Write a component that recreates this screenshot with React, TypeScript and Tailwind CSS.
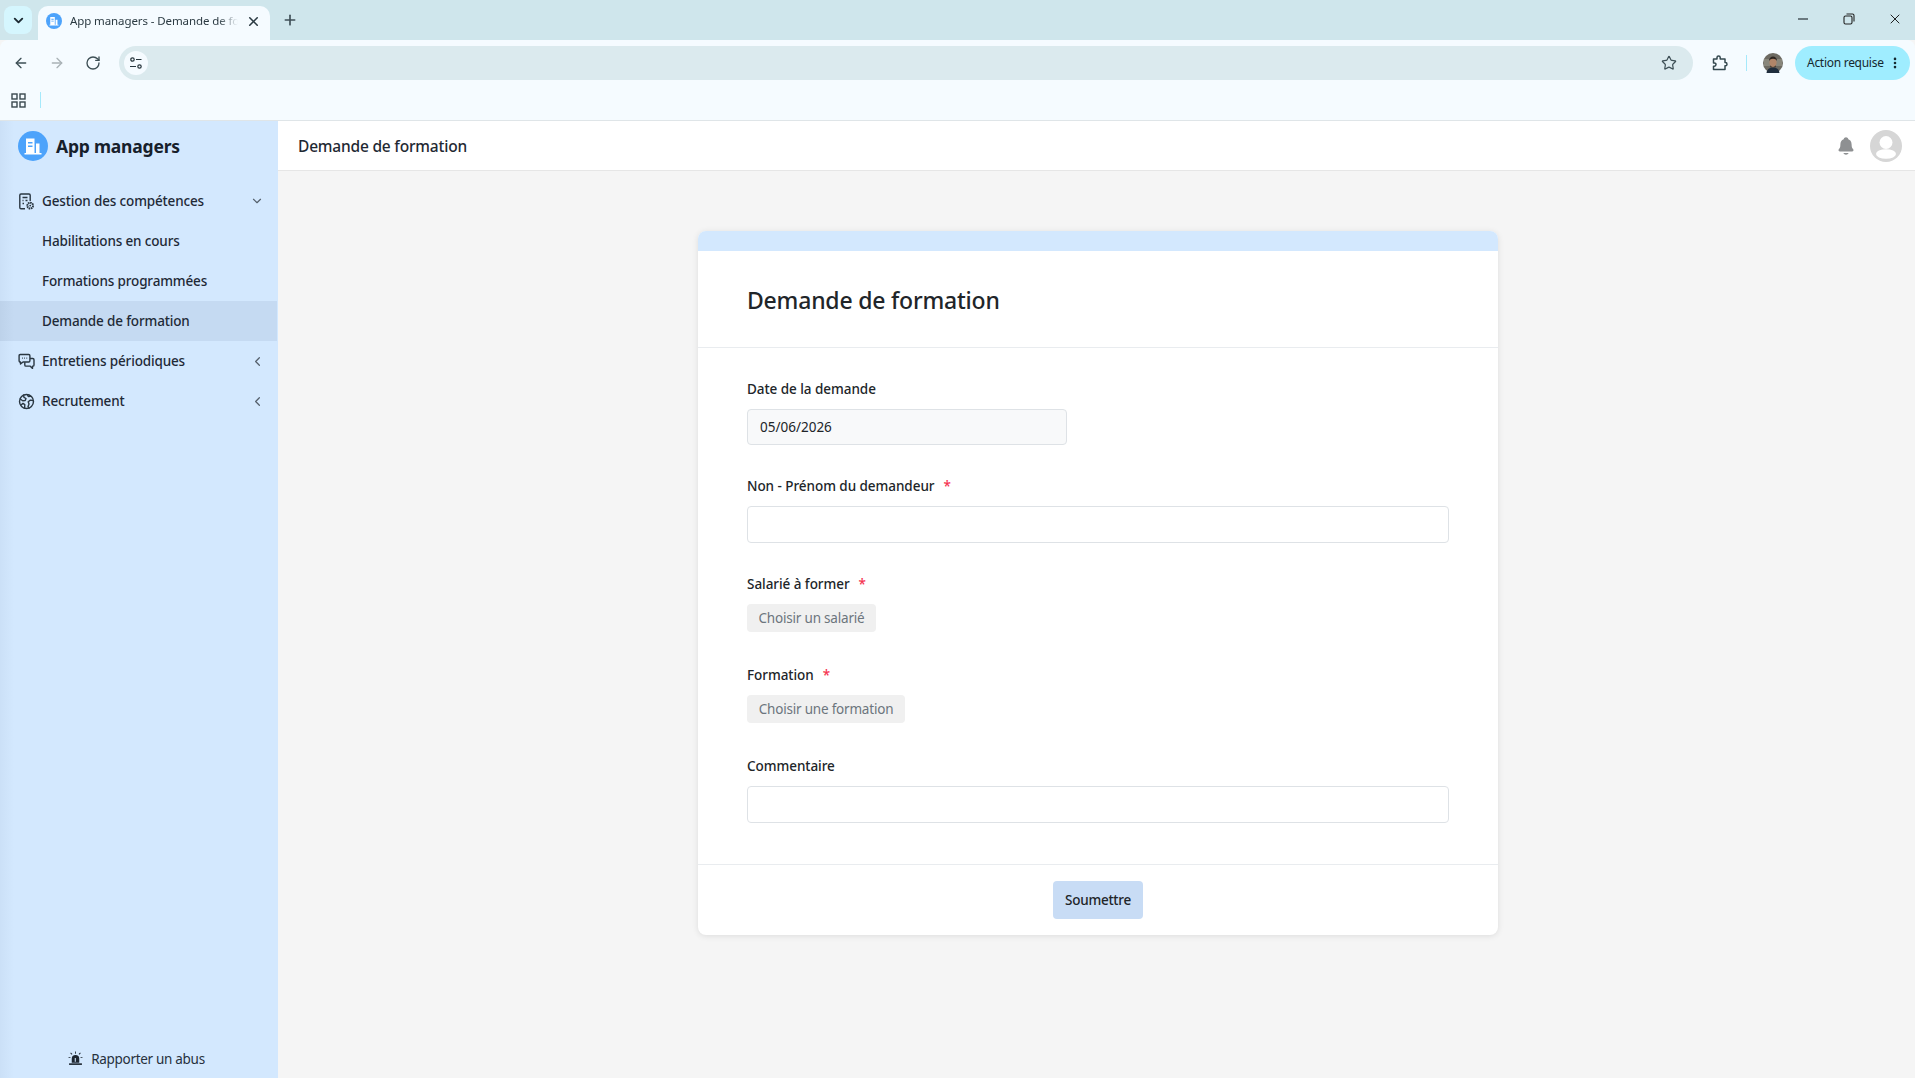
import { ArrowLeft, ArrowRight, ChevronDown, ChevronLeft, EllipsisVertical, Plus, RotateCw, Star, X } from "lucide-react";
import { IoNotifications } from "react-icons/io5";

const font = "font-['Noto_Sans','Liberation_Sans',sans-serif]";

function Logo({ size }: { size: number }) {
  return (
    <svg width={size} height={size} viewBox="0 0 30 30">
      <circle cx="15" cy="15" r="15" fill="#4da3fb" />
      <path d="M8 7.500h8.500v15H8z M18 12.500h3.500v10H18z M6.500 22h17v1.500h-17z" fill="#fff" />
      <path d="M10 11h4.500v1.500H10z M10 14.500h4.500V16H10z" fill="#4da3fb" />
    </svg>
  );
}

function FileGear() {
  return (
    <svg width="17" height="17" viewBox="0 0 17 17" fill="none" stroke="#2a3742" strokeWidth="1.4">
      <path d="M7 15.700H3a1.200 1.200 0 0 1-1.200-1.200V2.200A1.200 1.200 0 0 1 3 1h8a1.200 1.200 0 0 1 1.200 1.200V8" />
      <path d="M4.500 4.500h5M4.500 7.500h1M7.500 7.500h2M4.500 10.500h1.500" />
      <circle cx="12.200" cy="12.600" r="2.900" strokeWidth="1.900" strokeDasharray="1.600 0.600" />
      <circle cx="12.200" cy="12.600" r="0.900" fill="#2a3742" stroke="none" />
    </svg>
  );
}

function Chats() {
  return (
    <svg width="17" height="17" viewBox="0 0 17 17" fill="none" stroke="#2a3742" strokeWidth="1.4" strokeLinejoin="round">
      <path d="M2.300 1.500h8.400c.7 0 1.200.5 1.200 1.200v5.100c0 .7-.5 1.200-1.200 1.200H5L2.500 11V9H2.300c-.7 0-1.200-.5-1.200-1.200V2.700c0-.7.5-1.200 1.200-1.200z" />
      <path d="M12 5.500h2.800c.7 0 1.200.5 1.200 1.200v5.200c0 .7-.5 1.200-1.200 1.200h-.3v2.300L12 13.100H8c-.7 0-1.200-.5-1.200-1.200V9.300" />
      <path d="M4 5.200h.8M6.200 5.200H7M8.400 5.200h.8" strokeWidth="1.200" />
    </svg>
  );
}

function Globe() {
  return (
    <svg width="17" height="17" viewBox="0 0 17 17" fill="none" stroke="#2a3742" strokeWidth="1.4" strokeLinejoin="round" strokeLinecap="round">
      <circle cx="8.500" cy="8.500" r="7" />
      <path d="M5.500 2.200 6 4.400 8 5.500 7.200 7.500 4.700 7.800 2.200 6" />
      <path d="M9.500 1.700 10.300 3.600 12.700 3.400" />
      <path d="M15 7.500 12.400 7.100 10.200 8.800 11 11 10 13.800 11 14.900" />
      <path d="M3 12 5 10.400 6.800 11.600 6.600 15" />
    </svg>
  );
}

function Alarm() {
  return (
    <svg width="15" height="15" viewBox="0 0 14 14" fill="#1d2630">
      <path d="M3.500 11V7.300a3.500 3.500 0 0 1 7 0V11z" />
      <path d="M1 11.500h12V13H1z" />
      <path d="M6.600.5h.8v2h-.8zM2.100 2l.6-.6 1.400 1.500-.6.5zM11.900 2l-.6-.6-1.400 1.500.6.5zM.5 5.600h1.800v.8H.5zM11.700 5.600h1.800v.8h-1.800z" />
      <path d="M6.300 6.500h1V10h-1z" fill="#d3e8fe" />
    </svg>
  );
}

function NavRow({ icon, label, chevron, active }: { icon?: React.ReactNode; label: string; chevron?: "down" | "left"; active?: boolean }) {
  return (
    <div className={`mr-px flex h-10 items-center pl-[18px] pr-[12px] ${active ? "bg-[linear-gradient(90deg,#bdd2ea,#c5daf2_14px)]" : ""}`}>
      <div className="w-[24px] shrink-0">{icon}</div>
      <span className="flex-1 text-[13.5px] font-medium tracking-[-0.15px] text-[#1f2a37]">{label}</span>
      {chevron === "down" && <ChevronDown size={14} color="#55606c" className="mr-[1px]" />}
      {chevron === "left" && <ChevronLeft size={15} color="#55606c" />}
    </div>
  );
}

function Label({ text, required }: { text: string; required?: boolean }) {
  return (
    <div className="flex h-5 items-center text-[13.5px] font-medium tracking-[-0.05px] text-[#212529]">
      {text}
      {required && <span className="ml-[9px] text-[#f5334f]">*</span>}
    </div>
  );
}

export default function App() {
  return (
    <div className={`flex h-[1078px] w-[1915px] flex-col overflow-hidden bg-[#f5f5f5] ${font}`}>
      {/* browser tabs */}
      <div className="flex h-10 items-end bg-[#cfe6ec]">
        <div className="mb-[6px] ml-1 flex h-[28px] w-[28px] items-center justify-center rounded-lg bg-[#d5f6fe]">
          <ChevronDown size={15} strokeWidth={3} color="#1d2b33" />
        </div>
        <div className="ml-[6px] flex h-[34px] w-[232px] items-center rounded-t-[10px] bg-[#f5fbff] pb-1 pl-2 pr-[9px]">
          <Logo size={16} />
          <span className="ml-2 w-[168px] overflow-hidden text-[11.5px] tracking-[-0.1px] whitespace-nowrap text-[#2b3a42] [mask-image:linear-gradient(90deg,#000_88%,transparent)]">App managers - Demande de formation</span>
          <X size={15} strokeWidth={2.5} color="#2b3a42" className="ml-auto" />
        </div>
        <Plus size={16} strokeWidth={2.5} color="#3f4f57" className="mb-[12px] ml-[12px]" />
        <div className="mb-[13px] ml-auto flex items-center pr-[12px]">
          <div className="h-[2px] w-[10px] bg-[#6b7a80]" />
          <svg width="12" height="12" viewBox="0 0 12 12" fill="none" stroke="#222" strokeWidth="1.100" className="ml-[35px]">
            <rect x="1" y="3" width="8" height="8" rx="1.500" />
            <path d="M3.500 1h6a1.500 1.500 0 0 1 1.500 1.500v6" />
          </svg>
          <X size={16} strokeWidth={1.400} color="#111" className="ml-[32px]" />
        </div>
      </div>
      {/* browser toolbar */}
      <div className="flex h-[46px] items-center rounded-t-lg bg-[#f5fbff] pl-[13px]">
        <ArrowLeft size={16} strokeWidth={2} color="#3d4f55" />
        <ArrowRight size={16} strokeWidth={2} color="#a9b2b6" className="ml-[20px]" />
        <RotateCw size={16} strokeWidth={2} color="#3d4f55" className="ml-[20px]" />
        <div className="ml-[18px] flex h-[34px] w-[1574px] items-center rounded-full bg-[#dbeaee] pl-[5px] pr-[16px]">
          <div className="flex h-6 w-6 items-center justify-center rounded-full bg-[#f5fbff]">
            <svg width="14" height="14" viewBox="0 0 14 14" fill="none" stroke="#26353c" strokeWidth="1.200">
              <circle cx="3.500" cy="3.500" r="1.700" />
              <path d="M7 3.500h5.500M1 10.500h6" />
              <circle cx="10.500" cy="10.500" r="1.700" />
            </svg>
          </div>
          <Star size={16} strokeWidth={1.800} color="#3d4f55" className="ml-auto" />
        </div>
        <svg width="16" height="16" viewBox="0 0 16 16" fill="none" stroke="#34484f" strokeWidth="1.500" strokeLinejoin="round" className="ml-[19px]">
          <path d="M1.500 4H5V2.600a1.600 1.600 0 0 1 3.200 0V4H13v3.600h.4a1.600 1.600 0 0 1 0 3.200H13V14.500H1.500v-3.200h.8a1.600 1.600 0 0 0 0-3.400h-.8z" />
        </svg>
        <div className="ml-[18px] h-4 w-px bg-[#a5e9fb]" />
        <svg width="20" height="20" viewBox="0 0 20 20" className="ml-[16px]">
          <circle cx="10" cy="10" r="10" fill="#6d6a62" />
          <path d="M1 6h18v7H1z" fill="#9b9a8c" opacity="0.6" />
          <path d="M3.500 20c.5-4 3-5.500 6.500-5.500s6 1.500 6.500 5.500z" fill="#1f2d3d" />
          <ellipse cx="10" cy="9.500" rx="3.600" ry="4.700" fill="#b08569" />
          <path d="M6 8c0-3 2-4.500 4-4.500S14 5 14 8c-1-1.500-2-2.200-4-2.200S7 6.500 6 8z" fill="#2d2520" />
          <path d="M7 12c1 2.500 5 2.500 6 0l-.5 2.200h-5z" fill="#3a2c22" />
        </svg>
        <div className="ml-[12px] flex h-[34px] w-[115px] items-center rounded-full bg-[#9fedff] pl-3 text-[12px] tracking-[-0.28px] text-[#15282f]">
          Action requise
          <EllipsisVertical size={14} strokeWidth={2.500} color="#15282f" className="ml-auto mr-[8px]" />
        </div>
      </div>
      {/* bookmarks */}
      <div className="flex h-[35px] items-center border-b border-[#dfe5e8] bg-[#f5fbff] pb-[6px] pl-[11px]">
        <svg width="15" height="15" viewBox="0 0 15 15" fill="none" stroke="#3a484f" strokeWidth="1.400">
          <rect x="1" y="1" width="5" height="5" />
          <rect x="9" y="1" width="5" height="5" />
          <rect x="1" y="9" width="5" height="5" />
          <rect x="9" y="9" width="5" height="5" />
        </svg>
        <div className="ml-[14px] h-4 w-px bg-[#a5e9fb]" />
      </div>
      <div className="flex flex-1">
        {/* sidebar */}
        <aside className="flex w-[278px] flex-col bg-[linear-gradient(90deg,#cbe0f7,#d3e8fe_14px)]">
          <div className="flex h-[50px] items-center pl-[18px]">
            <Logo size={30} />
            <span className="ml-2 text-[17.5px] font-bold tracking-[-0.2px] text-[#17202b]">App managers</span>
          </div>
          <nav className="mt-[10px] flex flex-col">
            <NavRow icon={<FileGear />} label="Gestion des compétences" chevron="down" />
            <NavRow label="Habilitations en cours" />
            <NavRow label="Formations programmées" />
            <NavRow label="Demande de formation" active />
            <NavRow icon={<Chats />} label="Entretiens périodiques" chevron="left" />
            <NavRow icon={<Globe />} label="Recrutement" chevron="left" />
          </nav>
          <div className="mt-auto mb-[9px] flex items-center justify-center gap-[8px] pr-[5px] text-[13.5px] tracking-[-0.3px] text-[#27313d]">
            <Alarm />
            Rapporter un abus
          </div>
        </aside>
        {/* main */}
        <main className="flex flex-1 flex-col">
          <header className="flex h-[50px] items-center border-b border-[#e6e6e6] bg-white pl-[20px] pr-[13px]">
            <span className="mt-[2px] text-[15.5px] font-medium tracking-[-0.2px] text-[#1f2933]">Demande de formation</span>
            <IoNotifications size={20} color="#8e9092" className="ml-auto" />
            <svg width="32" height="32" viewBox="0 0 32 32" className="ml-[14px]">
              <circle cx="16" cy="16" r="16" fill="#d6d6d6" />
              <circle cx="16" cy="12.500" r="6.500" fill="#fff" />
              <ellipse cx="16" cy="24" rx="10" ry="4.800" fill="#fff" />
            </svg>
          </header>
          <div className="flex justify-center pl-[3px] pt-[60px]">
            <section className="w-[800px] overflow-hidden rounded-lg bg-white shadow-[0_1px_6px_rgba(0,0,0,0.1)]">
              <div className="h-5 bg-[#d3e8fe]" />
              <div className="flex h-[97px] items-center border-b border-[#e9ecef] px-[49px]">
                <h1 className="mt-[2px] text-[23px] font-medium tracking-[-0.2px] text-[#212529]">Demande de formation</h1>
              </div>
              <div className="flex flex-col px-[49px] pt-[31px] pb-[41px]">
                <Label text="Date de la demande" />
                <div className="mt-[10px] flex h-9 w-[320px] items-center rounded border border-[#dee2e6] bg-[#f8f9fa] px-3 text-[13.5px] text-[#212529]">05/06/2026</div>
                <div className="mt-[31px]"><Label text="Non - Prénom du demandeur" required /></div>
                <div className="mt-[10px] h-[37px] w-[702px] rounded border border-[#dee2e6] bg-white" />
                <div className="mt-[31px]"><Label text="Salarié à former" required /></div>
                <div className="mt-[10px] flex h-[28px] w-[129px] items-center justify-center rounded bg-[#f0f0f0] text-[13.5px] tracking-[-0.2px] text-[#6c757d]">Choisir un salarié</div>
                <div className="mt-[33px]"><Label text="Formation" required /></div>
                <div className="mt-[10px] flex h-[28px] w-[158px] items-center justify-center rounded bg-[#f0f0f0] text-[13.5px] tracking-[-0.2px] text-[#6c757d]">Choisir une formation</div>
                <div className="mt-[33px]"><Label text="Commentaire" /></div>
                <div className="mt-[10px] h-[37px] w-[702px] rounded border border-[#dee2e6] bg-white" />
              </div>
              <div className="flex h-[71px] items-center justify-center border-t border-[#e9ecef]">
                <button className="h-[38px] w-[90px] rounded bg-[#c8dcf5] text-[13.5px] font-medium tracking-[-0.25px] text-[#212529]">Soumettre</button>
              </div>
            </section>
          </div>
        </main>
      </div>
    </div>
  );
}
